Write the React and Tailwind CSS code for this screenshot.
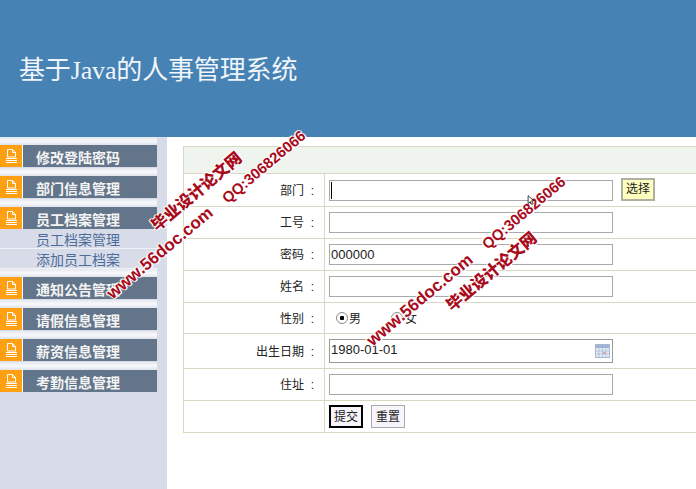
import { useState } from "react";

const font = "font-['Liberation_Sans','Noto_Sans_CJK_SC',sans-serif]";

const menus = [
  { name: "修改登陆密码" },
  { name: "部门信息管理" },
  { name: "员工档案管理", subs: ["员工档案管理", "添加员工档案"] },
  { name: "通知公告管理" },
  { name: "请假信息管理" },
  { name: "薪资信息管理" },
  { name: "考勤信息管理" },
];

const marks = [
  { text: "QQ:306826066", cls: "left-[264px] top-[167px] text-[15px] font-bold" },
  { text: "毕业设计论文网", cls: "left-[197px] top-[192px] text-[16px] font-black" },
  { text: "www.56doc.com", cls: "left-[160px] top-[253px] text-[17px] font-bold" },
  { text: "QQ:306826066", cls: "left-[524px] top-[213px] text-[15px] font-bold" },
  { text: "毕业设计论文网", cls: "left-[492px] top-[272px] text-[16px] font-black" },
  { text: "www.56doc.com", cls: "left-[420px] top-[300px] text-[17px] font-bold" },
];

const radioCls =
  "m-0 h-[12px] w-[12px] appearance-none rounded-full border border-[#8a8a8a] bg-white checked:bg-[radial-gradient(circle,#000_0,#000_2px,#fff_2.5px)]";

function DocIcon() {
  return (
    <svg width="11" height="14" viewBox="0 0 11 14" fill="none" stroke="#fff" strokeWidth="1">
      <path d="M1.500 .5h5l3 3v4.500h-8z" />
      <path d="M6.500 .5v3h3" />
      <path d="M0 9.500h11M0 11.500h11M0 13.500h11" />
    </svg>
  );
}

function CalendarIcon() {
  return (
    <svg width="15" height="14" viewBox="0 0 15 14">
      <rect x="0.5" y="0.5" width="14" height="13" fill="#e4ebf5" stroke="#a9b9d3" />
      <rect x="1" y="1" width="13" height="3" fill="#9db4d6" />
      <path d="M1 7h13M1 10h13M4 4v9M7.500 4v9M11 4v9" stroke="#b4c5de" />
      <rect x="8" y="8" width="3" height="2" fill="#d9a9a9" />
    </svg>
  );
}

function Field({ value = "", children }) {
  return (
    <div className="relative w-[284px]">
      <input
        readOnly
        value={value}
        className="block w-full h-[21px] border border-[#a9a9a9] bg-white px-[1px] text-[13px] text-[#222] outline-none"
      />
      {children}
    </div>
  );
}

function Row({ label, height, children }) {
  return (
    <tr className={height}>
      <td className="w-[141px] whitespace-pre border border-[#d8d8c0] pr-[10px] pt-[1px] text-right text-[12px] text-[#222]">
        {label}
      </td>
      <td className="border border-r-0 border-[#d8d8c0] pl-[4px] align-middle">{children}</td>
    </tr>
  );
}

export default function App() {
  const [gender, setGender] = useState("male");

  return (
    <div className={`relative h-[489px] w-[696px] overflow-hidden bg-white ${font}`}>
      {/* Header */}
      <div className="flex h-[137px] items-center bg-[#4682b4] pl-[19px] pt-[4px]">
        <h1 className="font-['Liberation_Serif','Noto_Sans_CJK_SC',serif] text-[26px] font-normal tracking-[-0.15px] text-[#f0f5fa]">
          基于Java的人事管理系统
        </h1>
      </div>

      <div className="flex h-[352px]">
        {/* Sidebar */}
        <div className="w-[167px] shrink-0 bg-[#d8dce8]">
          {menus.map((menu, i) => (
            <div key={i}>
              <div className="h-[8px] w-[157px] bg-gradient-to-b from-[#e4e7ef] via-[#f8f9fb] to-[#dfe2ec]" />
              <div className="flex h-[22px] w-[157px]">
                <div className="flex w-[22px] items-center justify-center bg-[#ffa012]">
                  <DocIcon />
                </div>
                <div className="flex flex-1 items-center border-l border-white bg-[#63758a] pl-[13px] pt-[5px] text-[14px] font-bold text-[#f4f4f4]">
                  {menu.name}
                </div>
              </div>
              {menu.subs?.map((sub) => (
                <div
                  key={sub}
                  className="flex h-[20px] w-[157px] items-center border-b border-[#f0f2f7] pl-[36px] pt-[3px] text-[14px] text-[#4d6c9c]"
                >
                  {sub}
                </div>
              ))}
              {!menu.subs && <div className="h-[1px]" />}
            </div>
          ))}
        </div>

        {/* Form */}
        <div className="flex-1 pl-[16px] pt-[9px]">
          <table className="w-full border-collapse">
            <tbody>
              <tr className="h-[27px]">
                <td colSpan={2} className="border border-r-0 border-[#d8d8c0] bg-[#eff5ee]" />
              </tr>
              <Row label="部门  :" height="h-[33px]">
                <div className="flex items-center gap-[8px]">
                  <Field>
                    <span className="absolute left-[2px] top-[2px] h-[17px] w-[1px] bg-black" />
                  </Field>
                  <button className="mb-[2px] h-[23px] w-[34px] border-2 border-[#b0b0a0] bg-[#ffffc0] text-[12px] text-[#222]">
                    选择
                  </button>
                </div>
              </Row>
              <Row label="工号  :" height="h-[32px]">
                <Field />
              </Row>
              <Row label="密码  :" height="h-[32px]">
                <Field value="000000" />
              </Row>
              <Row label="姓名  :" height="h-[32px]">
                <Field />
              </Row>
              <Row label="性别  :" height="h-[31px]">
                <div className="flex items-center pl-[7px] text-[12px] text-[#222]">
                  <input
                    type="radio"
                    checked={gender === "male"}
                    onChange={() => setGender("male")}
                    className={radioCls}
                  />
                  <span className="ml-[1px] w-[42px] pt-[1px]">男</span>
                  <input
                    type="radio"
                    checked={gender === "female"}
                    onChange={() => setGender("female")}
                    className={radioCls}
                  />
                  <span className="ml-[2px] pt-[1px]">女</span>
                </div>
              </Row>
              <Row label="出生日期  :" height="h-[35px]">
                <div className="relative w-[284px]">
                  <input
                    readOnly
                    value="1980-01-01"
                    className="block h-[24px] w-full border border-[#999] bg-white px-[1px] pb-[3px] text-[13px] text-[#222] outline-none"
                  />
                  <span className="absolute right-[3px] top-[5px]">
                    <CalendarIcon />
                  </span>
                </div>
              </Row>
              <Row label="住址  :" height="h-[32px]">
                <Field />
              </Row>
              <Row label="" height="h-[32px]">
                <div className="flex gap-[8px]">
                  <button className="h-[23px] w-[34px] border-2 border-black bg-[#f8f4fb] text-[12px] text-[#222]">
                    提交
                  </button>
                  <button className="h-[23px] w-[34px] border border-[#aaa] bg-[#f8f4fb] text-[12px] text-[#222]">
                    重置
                  </button>
                </div>
              </Row>
            </tbody>
          </table>
        </div>
      </div>

      {/* Watermarks */}
      {marks.map((mark, i) => (
        <span
          key={i}
          className={`pointer-events-none absolute -translate-x-1/2 -translate-y-1/2 -rotate-[40deg] whitespace-nowrap text-[#a80c1c] [text-shadow:1px_0_0_#fff,-1px_0_0_#fff,0_1px_0_#fff,0_-1px_0_#fff,1px_1px_1px_#fff,-1px_-1px_1px_#fff] ${mark.cls}`}
        >
          {mark.text}
        </span>
      ))}

      {/* Mouse pointer */}
      <svg className="absolute left-[527px] top-[195px]" width="8" height="13" viewBox="0 0 10 18" fill="#fff" stroke="#000" strokeWidth="1">
        <path d="M1 1v11l3-3 2 4 2-1-2-4h3z" />
      </svg>
    </div>
  );
}
